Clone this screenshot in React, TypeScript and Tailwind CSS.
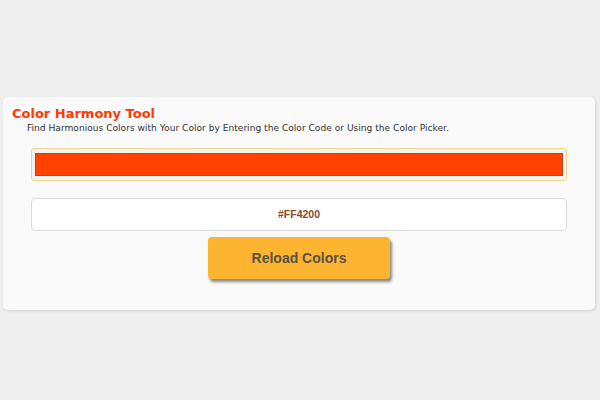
export default function App() {
  return (
    <div className="min-h-screen bg-[#efefef] pt-[97px] pl-[3px]">
      <div className="w-[592px] rounded-[5px] bg-[#fafafa] pb-[31px] pt-[8px] shadow-[1px_1px_3px_rgba(0,0,0,0.12)]">
        <h1 className="pl-[9px] font-['Comic_Sans_MS','DejaVu_Sans',sans-serif] text-[13px] font-bold leading-[17px] text-[#ff3a00]">
          Color Harmony Tool
        </h1>
        <p className="pl-[24px] font-['Comic_Sans_MS','DejaVu_Sans',sans-serif] text-[9.1px] leading-[13px] text-[#333]">
          Find Harmonious Colors with Your Color by Entering the Color Code or Using the Color Picker.
        </p>

        <div className="mx-[28px] mt-[13px] flex h-[33px] items-center rounded-[3px] border border-[#f2d58a] bg-[#f2f2f2] px-[3px]">
          <div className="h-[23px] w-full border border-[#b8452a] bg-[#ff4200]" />
        </div>

        <div className="mx-[28px] mt-[17px] flex h-[33px] items-center justify-center rounded-[4px] border border-[#dcdcdc] bg-white">
          <span className="font-['Liberation_Sans',Arial,sans-serif] text-[10.5px] font-bold text-[#8a4a2a]">#FF4200</span>
        </div>

        <div className="mt-[6px] flex justify-center">
          <button className="h-[42px] w-[182px] rounded-[4px] bg-[#fdb431] font-['Liberation_Sans',Arial,sans-serif] text-[14px] font-bold text-[#5a5144] shadow-[2px_3px_3px_rgba(0,0,0,0.45)]">
            Reload Colors
          </button>
        </div>
      </div>
    </div>
  );
}
